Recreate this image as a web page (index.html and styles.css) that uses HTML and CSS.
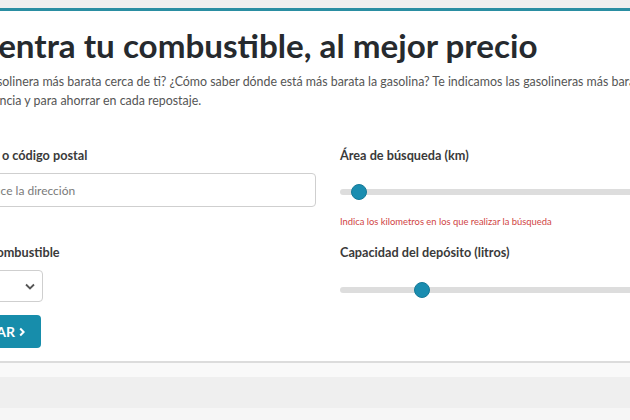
FILE: index.html
```html
<!DOCTYPE html>
<html lang="es">
<head>
<meta charset="utf-8">
<link rel="stylesheet" href="styles.css">
</head>
<body>
<div class="topstrip"></div>
<section class="finder">
  <div class="container">
    <h1 class="title">Encuentra tu combustible, al mejor precio</h1>
    <p class="intro">¿Buscas la gasolinera más barata cerca de ti? ¿Cómo saber dónde está más barata la gasolina? Te indicamos las gasolineras más baratas en tu zona<br>según la distancia y para ahorrar en cada repostaje.</p>
    <form class="grid">
      <div class="field">
        <label class="label">Dirección o código postal</label>
        <input class="input" type="text" placeholder="Introduce la dirección">
      </div>
      <div class="field">
        <label class="label">Área de búsqueda (km)</label>
        <div class="slider"><div class="track"><span class="thumb" style="left:11px"></span></div></div>
        <p class="hint">Indica los kilometros en los que realizar la búsqueda</p>
      </div>
      <div class="field">
        <label class="label">Tipo de combustible</label>
        <div class="select">
          <span class="select-value">Gasolina 95</span>
          <svg class="chev" width="10" height="7" viewBox="0 0 10 7"><path d="M1 1.5 L5 5.5 L9 1.5" fill="none" stroke="#555" stroke-width="1.8"/></svg>
        </div>
        <button class="btn" type="button">BUSCAR <svg class="btn-icon" width="6" height="10" viewBox="0 0 6 10"><path d="M1.2 1.5 L4.6 5 L1.2 8.5" fill="none" stroke="#fff" stroke-width="2"/></svg></button>
      </div>
      <div class="field">
        <label class="label">Capacidad del depósito (litros)</label>
        <div class="slider slider2"><div class="track"><span class="thumb" style="left:74px"></span></div></div>
      </div>
    </form>
  </div>
</section>
<footer class="foot">
  <div class="band"></div>
</footer>
</body>
</html>
```
FILE: styles.css
```css
* { box-sizing: border-box; }
html, body { margin: 0; padding: 0; }
body {
  font-family: Lato, "Open Sans", sans-serif;
  background: #f6f6f6;
  overflow: hidden;
  width: 630px;
  height: 420px;
}
.topstrip { height: 8px; background: #efefef; }
.finder {
  background: #fff;
  border-top: 3px solid #2a8ea2;
  border-bottom: 2px solid #dcdcdc;
  padding: 14px 0 13px;
}
.container {
  margin-left: -74px;
  width: 900px;
}
.title {
  margin: 0;
  font-size: 33.2px;
  line-height: 40px;
  font-weight: 700;
  color: #262a2e;
}
.intro {
  margin: 7px 0 0;
  width: 900px;
  font-size: 12.4px;
  line-height: 19px;
  color: #555;
}
.grid {
  margin: 36px 0 0 19px;
  display: grid;
  grid-template-columns: 371px 400px;
  column-gap: 24px;
  row-gap: 15px;
}
.field { display: flex; flex-direction: column; align-items: flex-start; }
.label {
  font-size: 12.7px;
  line-height: 18px;
  font-weight: 700;
  color: #3a3a3a;
}
.input {
  margin-top: 9px;
  width: 100%;
  height: 34px;
  border: 1px solid #cfcfcf;
  border-radius: 4px;
  padding: 0 12px 0 16px;
  font-family: inherit;
  font-size: 12px;
  color: #333;
}
.input::placeholder { color: #7a7a7a; }
.slider {
  margin-top: 11px;
  width: 100%;
  height: 34px;
  display: flex;
  align-items: center;
}
.slider2 { margin-top: 13px; height: 32px; }
.track {
  position: relative;
  width: 100%;
  height: 6px;
  border-radius: 3px;
  background: #dddddd;
}
.thumb {
  position: absolute;
  top: 50%;
  width: 16px;
  height: 16px;
  margin-top: -8px;
  border-radius: 50%;
  background: #1a8db0;
  border: 1px solid #157a98;
}
.hint {
  margin: 7px 0 0;
  font-size: 9.4px;
  line-height: 12px;
  color: #d04545;
}
.select {
  margin-top: 9px;
  width: 98px;
  height: 32px;
  border: 1px solid #cfcfcf;
  border-radius: 4px;
  display: flex;
  align-items: center;
  justify-content: space-between;
  padding: 0 7px 0 12px;
  font-size: 12px;
  color: #333;
}
.select-value { visibility: hidden; }
.chev { display: block; flex: none; }
.btn {
  margin-top: 13px;
  height: 33px;
  width: 96px;
  border: 0;
  border-radius: 4px;
  background: #178dab;
  color: #fff;
  font-family: inherit;
  font-weight: 700;
  font-size: 14px;
  display: flex;
  align-items: center;
  justify-content: flex-end;
  gap: 4px;
  padding: 0 16px 0 0;
}
.btn-icon { flex: none; display: block; }
.foot {
  padding-top: 14px;
  background: #f9f9f9;
}
.band { height: 31px; background: #efefef; }
```
